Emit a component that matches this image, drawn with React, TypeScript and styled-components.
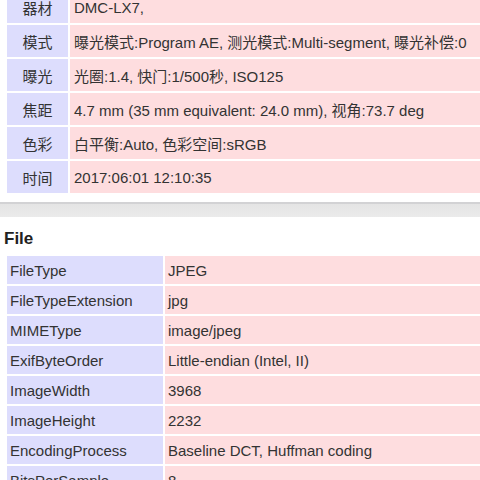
import React from "react";
import styled, { createGlobalStyle } from "styled-components";

const Global = createGlobalStyle`
  html, body { margin: 0; padding: 0; background: #fff; overflow: hidden; }
  body { font-family: "Liberation Sans", Arial, "Noto Sans CJK SC", sans-serif; color: #333; }
`;

const Page = styled.div`
  width: 480px;
  height: 480px;
  overflow: hidden;
`;

const Table = styled.table<{ $top?: number }>`
  margin: ${(p) => p.$top ?? 0}px 0 0 5px;
  width: 480px;
  border-collapse: separate;
  border-spacing: 2px;
  font-size: 15px;
  table-layout: fixed;
`;

const Label = styled.td<{ $w: number; $h: number; $center?: boolean }>`
  width: ${(p) => p.$w}px;
  height: ${(p) => p.$h}px;
  padding: 0 ${(p) => (p.$center ? 0 : 3)}px;
  background: #ddddfd;
  text-align: ${(p) => (p.$center ? "center" : "left")};
  white-space: nowrap;
  box-sizing: border-box;
  vertical-align: middle;
`;

const Value = styled.td<{ $pad: number }>`
  padding: 0 ${(p) => p.$pad}px;
  background: #fedddf;
  white-space: nowrap;
  overflow: hidden;
  vertical-align: middle;
`;

const Divider = styled.div`
  margin-top: 7px;
  height: 13px;
  border-top: 2px solid #d2d2d4;
  background: linear-gradient(#e4e4e4, #ebebeb);
`;

const Heading = styled.h3`
  margin: 12px 0 5px 4px;
  font-size: 17px;
  line-height: 20px;
  font-weight: bold;
  color: #222;
`;

const summary: [string, string][] = [
  ["器材", "DMC-LX7,"],
  ["模式", "曝光模式:Program AE, 测光模式:Multi-segment, 曝光补偿:0"],
  ["曝光", "光圈:1.4, 快门:1/500秒, ISO125"],
  ["焦距", "4.7 mm (35 mm equivalent: 24.0 mm), 视角:73.7 deg"],
  ["色彩", "白平衡:Auto, 色彩空间:sRGB"],
  ["时间", "2017:06:01 12:10:35"],
];

const file: [string, string][] = [
  ["FileType", "JPEG"],
  ["FileTypeExtension", "jpg"],
  ["MIMEType", "image/jpeg"],
  ["ExifByteOrder", "Little-endian (Intel, II)"],
  ["ImageWidth", "3968"],
  ["ImageHeight", "2232"],
  ["EncodingProcess", "Baseline DCT, Huffman coding"],
  ["BitsPerSample", "8"],
];

export default function App() {
  return (
    <Page>
      <Global />
      <Table $top={-11}>
        <tbody>
          {summary.map(([k, v]) => (
            <tr key={k}>
              <Label $w={61} $h={32} $center>
                {k}
              </Label>
              <Value $pad={4}>{v}</Value>
            </tr>
          ))}
        </tbody>
      </Table>
      <Divider />
      <Heading>File</Heading>
      <Table>
        <tbody>
          {file.map(([k, v]) => (
            <tr key={k}>
              <Label $w={156} $h={28}>
                {k}
              </Label>
              <Value $pad={3}>{v}</Value>
            </tr>
          ))}
        </tbody>
      </Table>
    </Page>
  );
}
